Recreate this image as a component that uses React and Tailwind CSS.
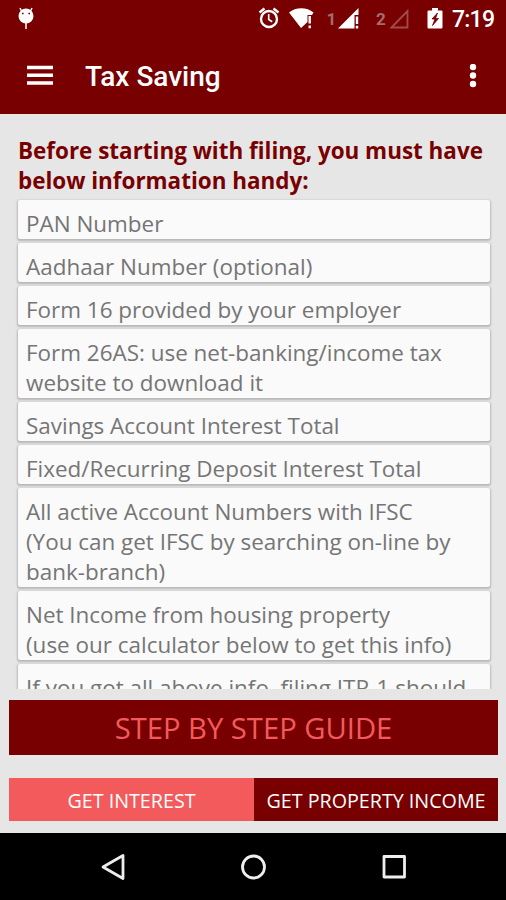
const checklist = [
    ['PAN Number'],
    ['Aadhaar Number (optional)'],
    ['Form 16 provided by your employer'],
    ['Form 26AS: use net-banking/income tax', 'website to download it'],
    ['Savings Account Interest Total'],
    ['Fixed/Recurring Deposit Interest Total'],
    ['All active Account Numbers with IFSC', '(You can get IFSC by searching on-line by', 'bank-branch)'],
    ['Net Income from housing property', '(use our calculator below to get this info)'],
    ['If you got all above info, filing ITR-1 should'],
];

function StatusBar() {
    return (
        <div className="h-[37px] shrink-0 flex items-center text-white">
            <svg className="w-[506px] h-[37px]" viewBox="0 0 506 37" fill="none">
                {/* debug notification */}
                <circle cx="26" cy="16" r="7.500" fill="#fff" />
                <path d="M21.500 11l-1.500-3M30.500 11l1.500-3M26 22v7" stroke="#fff" strokeWidth="1.500" />
                <path d="M22 13.500h1.600M28.400 13.500h1.600" stroke="#780000" strokeWidth="1.300" />

                {/* alarm */}
                <circle cx="269" cy="19" r="8" stroke="#fff" strokeWidth="2.400" />
                <path d="M268.700 14v5.500l3.500 2.200" stroke="#fff" strokeWidth="1.600" />
                <path d="M259.500 12.500l5-4M278.500 12.500l-5-4" stroke="#fff" strokeWidth="2.400" />

                {/* wifi with warning */}
                <path d="M289 12.500c6.500-5.800 18-5.800 24.500 0l-1.500 2.500h-4.500v7l-6.500 6z" fill="#fff" />
                <path d="M309.700 16v7.500M309.700 25.500v2.700" stroke="#fff" strokeWidth="2.400" />

                {/* sim 1 */}
                <text x="326.500" y="25" fontFamily="Roboto, sans-serif" fontSize="17" fontWeight="700" fill="#a66c6c">1</text>
                <path d="M338 28.500L358.500 8v7h-4v13.500z" fill="#fff" />
                <path d="M357 16.500v7.500M357 25.700v2.800" stroke="#fff" strokeWidth="2.400" />

                {/* sim 2 */}
                <text x="376" y="25" fontFamily="Roboto, sans-serif" fontSize="17" fontWeight="700" fill="#a66c6c">2</text>
                <path d="M391.500 27.500L407.500 11v16.500z" stroke="#a14b4b" strokeWidth="1.800" />

                {/* battery */}
                <path d="M428.500 10.500h3.500V8h6v2.500h3.500q1 0 1 1v16q0 1-1 1h-13q-1 0-1-1v-16q0-1 1-1z" fill="#fff" />
                <path d="M437.500 13l-5.500 6h3l-2.500 6.500 6-7h-3z" fill="#780000" stroke="#780000" strokeWidth="0.800" />

                <text x="452" y="26.500" fontFamily="Roboto, sans-serif" fontSize="23" fontWeight="500" fill="#fff" textLength="43">7:19</text>
            </svg>
        </div>
    );
}

function AppBar() {
    return (
        <div className="h-[77px] shrink-0 flex items-center pl-[27px] pr-[29px] text-white">
            <svg className="w-[26px] h-[22px]" viewBox="0 0 26 22">
                <path d="M0 2.500h26M0 10.200h26M0 18h26" stroke="#fff" strokeWidth="3.600" />
            </svg>
            <h1 className="ml-8 mt-[3px] font-['Roboto',sans-serif] font-medium text-[28px] leading-8 whitespace-nowrap">Tax Saving</h1>
            <svg className="ml-auto w-2 h-6" viewBox="0 0 8 24" fill="#fff">
                <circle cx="4" cy="3" r="3.200" />
                <circle cx="4" cy="11.500" r="3.200" />
                <circle cx="4" cy="20" r="3.200" />
            </svg>
        </div>
    );
}

function NavBar() {
    return (
        <div className="h-[67px] shrink-0 bg-black flex items-center justify-center">
            <svg className="w-[310px] h-10" viewBox="0 0 310 40" fill="none" stroke="#eee" strokeWidth="2.800" strokeLinejoin="round">
                <path d="M25 8.500v23L5 20z" />
                <circle cx="155.500" cy="20" r="11" />
                <rect x="286" y="9.500" width="20.500" height="20.500" />
            </svg>
        </div>
    );
}

export default function App() {
    return (
        <main className="w-[506px] h-[900px] flex flex-col overflow-hidden bg-[#e6e6e6] font-['Open_Sans',sans-serif]">
            <header className="h-[114px] shrink-0 flex flex-col bg-[#780000]">
                <StatusBar />
                <AppBar />
            </header>

            <section className="h-[575px] shrink-0 overflow-hidden pl-[18px] pr-4 pt-[22px]">
                <h2 className="font-bold text-[22.45px] leading-[30px] text-[#780000] whitespace-nowrap">
                    Before starting with filing, you must have<br />
                    below information handy:
                </h2>
                <ul className="mt-1 flex flex-col gap-1">
                    {checklist.map((lines) => (
                        <li
                            key={lines[0]}
                            className="shrink-0 rounded-[2px] bg-[#fafafa] pt-[9px] pl-2 text-[22.45px] leading-[30px] text-[#757575] whitespace-nowrap shadow-[0_1px_2px_1px_rgba(0,0,0,0.2)]"
                        >
                            {lines.map((line) => (
                                <div key={line}>{line}</div>
                            ))}
                        </li>
                    ))}
                </ul>
            </section>

            <div className="flex-1 flex flex-col pl-[9px] pr-2 pt-[11px]">
                <button className="h-[55px] pt-0.5 bg-[#780000] text-[#f25a5c] text-[29.2px] leading-none">STEP BY STEP GUIDE</button>
                <div className="mt-[23px] h-[43px] flex text-[19.7px] font-medium text-white whitespace-nowrap">
                    <button className="w-[245px] pt-[3px] bg-[#f25a5c]">GET INTEREST</button>
                    <button className="flex-1 pt-[3px] bg-[#780000]">GET PROPERTY INCOME</button>
                </div>
            </div>

            <NavBar />
        </main>
    );
}
